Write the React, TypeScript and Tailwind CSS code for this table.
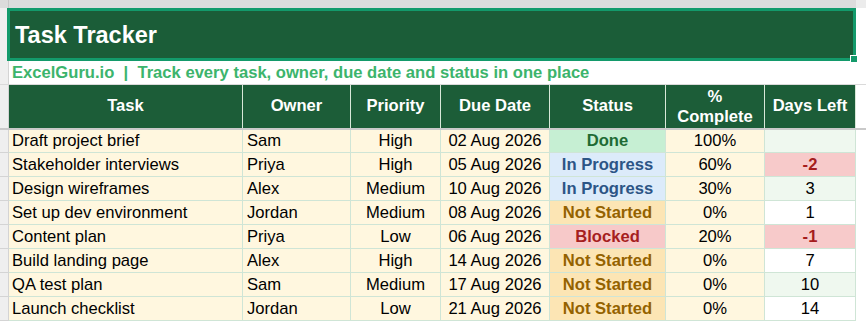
import React from 'react';

type Status = 'Done' | 'In Progress' | 'Not Started' | 'Blocked';

interface TaskRow {
  task: string;
  owner: string;
  priority: string;
  due: string;
  status: Status;
  pct: string;
  days: string;
  daysTone: 'green' | 'red' | 'white';
}

const rows: TaskRow[] = [
  { task: 'Draft project brief', owner: 'Sam', priority: 'High', due: '02 Aug 2026', status: 'Done', pct: '100%', days: '', daysTone: 'green' },
  { task: 'Stakeholder interviews', owner: 'Priya', priority: 'High', due: '05 Aug 2026', status: 'In Progress', pct: '60%', days: '-2', daysTone: 'red' },
  { task: 'Design wireframes', owner: 'Alex', priority: 'Medium', due: '10 Aug 2026', status: 'In Progress', pct: '30%', days: '3', daysTone: 'green' },
  { task: 'Set up dev environment', owner: 'Jordan', priority: 'Medium', due: '08 Aug 2026', status: 'Not Started', pct: '0%', days: '1', daysTone: 'white' },
  { task: 'Content plan', owner: 'Priya', priority: 'Low', due: '06 Aug 2026', status: 'Blocked', pct: '20%', days: '-1', daysTone: 'red' },
  { task: 'Build landing page', owner: 'Alex', priority: 'High', due: '14 Aug 2026', status: 'Not Started', pct: '0%', days: '7', daysTone: 'white' },
  { task: 'QA test plan', owner: 'Sam', priority: 'Medium', due: '17 Aug 2026', status: 'Not Started', pct: '0%', days: '10', daysTone: 'green' },
  { task: 'Launch checklist', owner: 'Jordan', priority: 'Low', due: '21 Aug 2026', status: 'Not Started', pct: '0%', days: '14', daysTone: 'white' },
];

const statusStyle: Record<Status, string> = {
  Done: 'bg-[#c6efd3] text-[#1e6b34]',
  'In Progress': 'bg-[#dcebfa] text-[#2c5586]',
  'Not Started': 'bg-[#fce5b4] text-[#946200]',
  Blocked: 'bg-[#f7c9c9] text-[#a61f1f]',
};

const daysStyle = {
  green: 'bg-[#eff8ef] text-black',
  red: 'bg-[#f7caca] text-[#a51d1d] font-bold',
  white: 'bg-white text-black',
};

const cell = 'flex items-center border-r border-[#cfe5d6] shrink-0 h-full whitespace-nowrap';

export default function App() {
  return (
    <div className="w-[866px] h-[322px] overflow-hidden bg-white font-['Liberation_Sans',Arial,sans-serif] text-black">
      {/* column header strip */}
      <div className="flex h-[8px]">
        <div className="w-[9px] bg-[#dcdcdc] border-r border-[#c8c8c8]" />
        <div className="w-[847px] bg-[#dcdcdc]" />
        <div className="flex-1 bg-[#ececec]" />
      </div>

      {/* title */}
      <div className="flex h-[53px]">
        <div className="w-[7px] bg-[#efefef]" />
        <div className="relative w-[849px] border-[3px] border-[#139a6b] bg-[#1b5d38] flex items-center pl-[5px] pt-[2px]">
          <span className="text-[23.5px] font-bold text-white">Task Tracker</span>
          <div className="absolute -right-[5px] -bottom-[5px] w-[8px] h-[8px] bg-[#139a6b] border border-white" />
        </div>
        <div className="flex-1 bg-white" />
      </div>

      {/* subtitle */}
      <div className="flex h-[24px] border-b border-[#dadada]">
        <div className="w-[9px] bg-[#efefef] border-r border-[#d4d4d4]" />
        <div className="flex items-center pl-[3px] pt-[2px] text-[16.6px] font-bold text-[#3cb46c] whitespace-pre">
          ExcelGuru.io  |  Track every task, owner, due date and status in one place
        </div>
      </div>

      {/* header row */}
      <div className="flex h-[43px]">
        <div className="w-[9px] bg-[#efefef] border-r border-[#d4d4d4]" />
        <div className="flex bg-[#1c5d38] text-white font-bold text-[16.6px] h-full">
          <div className={`${cell} w-[234px] justify-center border-[#d8e8d8]`}>Task</div>
          <div className={`${cell} w-[108px] justify-center border-[#d8e8d8]`}>Owner</div>
          <div className={`${cell} w-[90px] justify-center border-[#d8e8d8]`}>Priority</div>
          <div className={`${cell} w-[109px] justify-center border-[#d8e8d8]`}>Due Date</div>
          <div className={`${cell} w-[116px] justify-center border-[#d8e8d8]`}>Status</div>
          <div className={`${cell} w-[99px] justify-center text-center leading-[20px] border-[#d8e8d8]`}>
            %<br />Complete
          </div>
          <div className={`${cell} w-[91px] justify-center border-[#d8e8d8]`}>Days Left</div>
        </div>
      </div>
      <div className="h-[2px] bg-[#c9c9c9]" />

      {/* body rows */}
      {rows.map((r, i) => (
        <div key={r.task} className={`flex ${i === 0 ? 'h-[23px]' : 'h-[24px]'} text-[16.6px]`}>
          <div className="w-[9px] bg-[#efefef] border-r border-b border-[#d4d4d4]" />
          <div className="flex h-full bg-[#fff7df] border-b border-[#cfe5d6]">
            <div className={`${cell} w-[234px] pl-[3px] pt-[1px]`}>{r.task}</div>
            <div className={`${cell} w-[108px] pl-[4px] pt-[1px]`}>{r.owner}</div>
            <div className={`${cell} w-[90px] justify-center pt-[1px]`}>{r.priority}</div>
            <div className={`${cell} w-[109px] justify-center pt-[1px]`}>{r.due}</div>
            <div className={`${cell} w-[116px] justify-center pt-[1px] font-bold ${statusStyle[r.status]}`}>{r.status}</div>
            <div className={`${cell} w-[99px] justify-center pt-[1px]`}>{r.pct}</div>
            <div className={`${cell} w-[91px] justify-center pt-[1px] ${daysStyle[r.daysTone]}`}>{r.days}</div>
          </div>
        </div>
      ))}
    </div>
  );
}
